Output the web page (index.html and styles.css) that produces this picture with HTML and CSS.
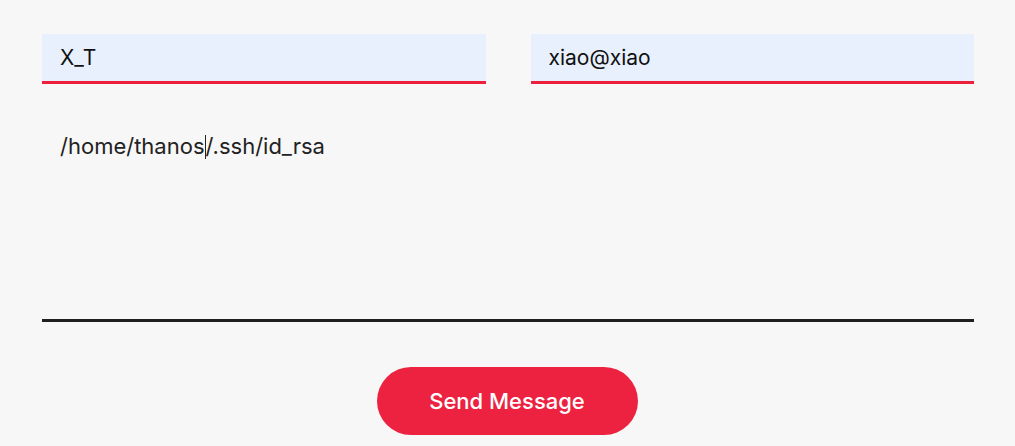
FILE: index.html
```html
<!DOCTYPE html>
<html>
<head>
<meta charset="utf-8">
<link rel="stylesheet" href="styles.css">
</head>
<body>
<form class="contact">
  <div class="row">
    <input class="field" type="text" value="X_T">
    <input class="field" type="text" value="xiao@xiao">
  </div>
  <div class="message">/home/thanos<span class="caret"></span>/.ssh/id_rsa</div>
  <div class="actions">
    <button class="send" type="button">Send Message</button>
  </div>
</form>
</body>
</html>
```
FILE: styles.css
```css
html, body {
  margin: 0;
  padding: 0;
  background: #f7f7f7;
}
.contact {
  padding: 34px 41px 0 42px;
  font-family: Inter, "Open Sans", sans-serif;
}
.row {
  display: flex;
  gap: 45px;
}
.field {
  flex: 1;
  min-width: 0;
  box-sizing: border-box;
  height: 50px;
  border: none;
  border-bottom: 3px solid #ee1f3d;
  background: #e8f0fe;
  padding: 0 18px;
  font-family: Inter, "Liberation Sans", sans-serif;
  font-size: 21px;
  color: #111;
  outline: none;
}
.message {
  margin-top: 40px;
  height: 198px;
  box-sizing: border-box;
  padding: 7px 18px;
  border-bottom: 3px solid #1f1f1f;
  font-size: 22px;
  color: #222;
  line-height: 30px;
}
.caret {
  display: inline-block;
  width: 1px;
  height: 24px;
  background: #222;
  vertical-align: -5px;
}
.actions {
  display: flex;
  justify-content: center;
  padding-top: 45px;
  padding-right: 2px;
}
.send {
  width: 261px;
  height: 68px;
  border: none;
  border-radius: 34px;
  background: #ec2240;
  color: #fff;
  font-family: Inter, "Open Sans", sans-serif;
  font-size: 22px;
  font-weight: 500;
}
```
